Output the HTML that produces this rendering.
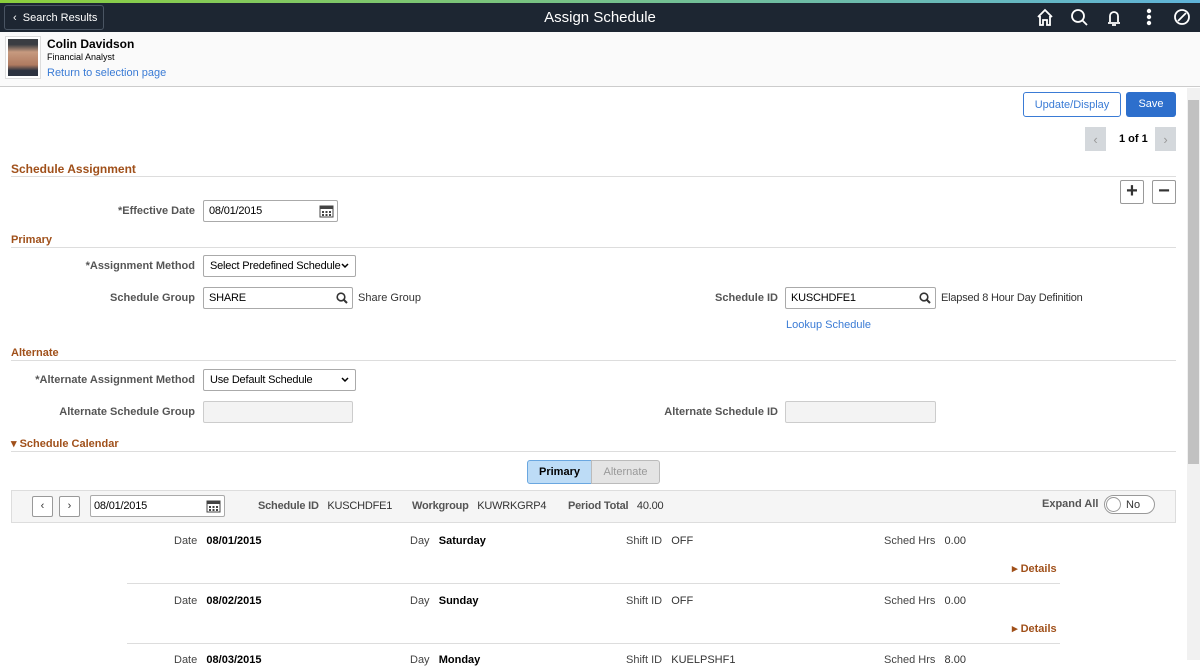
<!DOCTYPE html><html><head><style>
*{box-sizing:border-box;margin:0;padding:0}
body{width:1200px;height:660px;overflow:hidden;font-family:"Liberation Sans",Arial,sans-serif;font-size:11px;color:#333;background:#fff;position:relative}
.a{position:absolute;white-space:nowrap}
.lbl{font-weight:bold;color:#555;font-size:11px;text-align:right}
.inp{position:absolute;height:22px;border:1px solid #aaa;border-radius:2px;background:#fff;font-size:11px;padding:4px 5px;color:#000;white-space:nowrap;letter-spacing:-0.2px}
.dis{background:#f3f3f3;border-color:#ccc}
.sec{position:absolute;left:11px;font-weight:bold;color:#a0501a;font-size:11px}
.line{position:absolute;left:11px;right:24px;border-top:1px solid #ddd}
.dl{color:#444}.db{font-weight:bold;color:#000}
.det{color:#a0501a;font-weight:bold}
.car{position:absolute;right:6px;top:7px}
.cal{position:absolute;right:3px;top:3px}
</style></head><body>
<div class="a" style="left:0;top:0;width:1200px;height:3px;background:linear-gradient(90deg,#8ccf3c,#5fb3d9)"></div>
<div class="a" style="left:0;top:3px;width:1200px;height:29px;background:#1d2632"></div>
<div class="a" style="left:4px;top:5px;width:100px;height:25px;border:1px solid #4a5563;border-radius:3px;color:#fff;font-size:11px;padding:6px 0 0 8px">‹&nbsp; Search Results</div>
<div class="a" style="left:0;width:1200px;top:9px;text-align:center;color:#fff;font-size:15px">Assign Schedule</div>
<svg class="a" style="left:1030px;top:6px" width="165" height="22" fill="none" stroke="#fff" stroke-width="1.8">
<path d="M8 11 L15 4 L22 11 M10 10 V19 H13 V14 H17 V19 H20 V10"/>
<circle cx="48" cy="10" r="6"/><path d="M52 14 L57 19"/>
<path d="M78 17 H90 M80 16 V10 a4 4 0 0 1 8 0 V16 M82 19 h4"/>
<circle cx="119" cy="5" r="1.3" fill="#fff"/><circle cx="119" cy="11" r="1.3" fill="#fff"/><circle cx="119" cy="17" r="1.3" fill="#fff"/>
<circle cx="152" cy="11" r="7"/><path d="M148 15 L156 7"/>
</svg>
<div class="a" style="left:0;top:32px;width:1200px;height:55px;background:#fafafa;border-bottom:1px solid #ccc"></div>
<div class="a" style="left:5px;top:36px;width:36px;height:43px;border:1px solid #ddd;background:#fff;padding:2px"><div style="width:100%;height:100%;background:linear-gradient(#3a3d42 15%,#c79a7f 35%,#b07a60 70%,#2d3340 85%)"></div></div>
<div class="a" style="left:47px;top:37px;font-weight:bold;font-size:12px;color:#000">Colin Davidson</div>
<div class="a" style="left:47px;top:52px;font-size:9px;color:#000">Financial Analyst</div>
<div class="a" style="left:47px;top:67px;color:#3a7bd5;font-size:11px">Return to selection page</div>
<div class="a" style="left:1187px;top:88px;width:13px;height:572px;background:#f1f1f1"></div>
<div class="a" style="left:1188px;top:100px;width:11px;height:364px;background:#c1c1c1"></div>
<div class="a" style="left:1023px;top:92px;width:98px;height:25px;border:1px solid #3a7bd5;border-radius:3px;color:#3a7bd5;text-align:center;padding-top:6px">Update/Display</div>
<div class="a" style="left:1126px;top:92px;width:50px;height:25px;background:#2d6fcc;border-radius:3px;color:#fff;text-align:center;padding-top:6px">Save</div>
<div class="a" style="left:1085px;top:127px;width:21px;height:24px;background:#d4d8dc;color:#999;text-align:center;padding-top:5px;font-size:13px">‹</div>
<div class="a" style="left:1119px;top:133px;font-weight:bold;color:#000">1 of 1</div>
<div class="a" style="left:1155px;top:127px;width:21px;height:24px;background:#d4d8dc;color:#999;text-align:center;padding-top:5px;font-size:13px">›</div>
<div class="sec" style="top:162px;font-size:12px">Schedule Assignment</div><div class="line" style="top:176px"></div>
<div class="a" style="left:1120px;top:180px;width:24px;height:24px;border:1px solid #999;border-radius:2px;text-align:center;font-size:20px;font-weight:bold;line-height:21px;color:#333">+</div>
<div class="a" style="left:1152px;top:180px;width:24px;height:24px;border:1px solid #999;border-radius:2px;text-align:center;font-size:20px;font-weight:bold;line-height:20px;color:#333">−</div>
<div class="a lbl" style="left:0;width:195px;top:205px">*Effective Date</div>
<div class="inp" style="left:203px;top:200px;width:135px">08/01/2015<svg class="cal" width="15" height="14"><rect x="1" y="2" width="13" height="11" fill="none" stroke="#444"/><rect x="1" y="2" width="13" height="3" fill="#444"/><g fill="#444"><rect x="3" y="7" width="2" height="2"/><rect x="6.5" y="7" width="2" height="2"/><rect x="10" y="7" width="2" height="2"/><rect x="3" y="10" width="2" height="2"/><rect x="6.5" y="10" width="2" height="2"/><rect x="10" y="10" width="2" height="2"/></g></svg></div>
<div class="sec" style="top:234px">Primary</div><div class="line" style="top:247px"></div>
<div class="a lbl" style="left:0;width:195px;top:260px">*Assignment Method</div>
<div class="inp" style="left:203px;top:255px;width:153px;padding-left:6px">Select Predefined Schedule<svg class="car" width="8" height="6"><path d="M1 1 L4 4 L7 1" fill="none" stroke="#000" stroke-width="1.5"/></svg></div>
<div class="a lbl" style="left:0;width:195px;top:292px">Schedule Group</div>
<div class="inp" style="left:203px;top:287px;width:150px">SHARE<svg class="cal" style="top:4px;right:4px" width="12" height="12"><circle cx="5" cy="5" r="3.8" fill="none" stroke="#333" stroke-width="1.6"/><path d="M8 8 L11 11" stroke="#333" stroke-width="2"/></svg></div>
<div class="a" style="left:358px;top:292px;color:#333">Share Group</div>
<div class="a lbl" style="left:600px;width:178px;top:292px">Schedule ID</div>
<div class="inp" style="left:785px;top:287px;width:151px">KUSCHDFE1<svg class="cal" style="top:4px;right:4px" width="12" height="12"><circle cx="5" cy="5" r="3.8" fill="none" stroke="#333" stroke-width="1.6"/><path d="M8 8 L11 11" stroke="#333" stroke-width="2"/></svg></div>
<div class="a" style="left:941px;top:292px;letter-spacing:-0.2px">Elapsed 8 Hour Day Definition</div>
<div class="a" style="left:786px;top:319px;color:#3a7bd5">Lookup Schedule</div>
<div class="sec" style="top:347px">Alternate</div><div class="line" style="top:360px"></div>
<div class="a lbl" style="left:0;width:195px;top:374px">*Alternate Assignment Method</div>
<div class="inp" style="left:203px;top:369px;width:153px;padding-left:6px">Use Default Schedule<svg class="car" width="8" height="6"><path d="M1 1 L4 4 L7 1" fill="none" stroke="#000" stroke-width="1.5"/></svg></div>
<div class="a lbl" style="left:0;width:195px;top:406px">Alternate Schedule Group</div>
<div class="inp dis" style="left:203px;top:401px;width:150px"></div>
<div class="a lbl" style="left:600px;width:178px;top:406px">Alternate Schedule ID</div>
<div class="inp dis" style="left:785px;top:401px;width:151px"></div>
<div class="sec" style="top:437px">▾ Schedule Calendar</div><div class="line" style="top:451px"></div>
<div class="a" style="left:527px;top:460px;width:65px;height:24px;background:#bddcf6;border:1px solid #6aa7e0;border-radius:3px 0 0 3px;font-weight:bold;color:#000;text-align:center;padding-top:5px">Primary</div>
<div class="a" style="left:591px;top:460px;width:69px;height:24px;background:#e4e4e4;border:1px solid #bbb;border-radius:0 3px 3px 0;color:#999;text-align:center;padding-top:5px">Alternate</div>
<div class="a" style="left:11px;top:490px;width:1165px;height:33px;background:#f5f5f5;border:1px solid #ddd"></div>
<div class="a" style="left:32px;top:496px;width:21px;height:21px;border:1px solid #999;background:#fff;border-radius:2px;text-align:center;padding-top:3px">‹</div>
<div class="a" style="left:59px;top:496px;width:21px;height:21px;border:1px solid #999;background:#fff;border-radius:2px;text-align:center;padding-top:3px">›</div>
<div class="inp" style="left:90px;top:495px;width:135px;padding-left:3px">08/01/2015<svg class="cal" width="15" height="14"><rect x="1" y="2" width="13" height="11" fill="none" stroke="#444"/><rect x="1" y="2" width="13" height="3" fill="#444"/><g fill="#444"><rect x="3" y="7" width="2" height="2"/><rect x="6.5" y="7" width="2" height="2"/><rect x="10" y="7" width="2" height="2"/><rect x="3" y="10" width="2" height="2"/><rect x="6.5" y="10" width="2" height="2"/><rect x="10" y="10" width="2" height="2"/></g></svg></div>
<div class="a" style="left:258px;top:500px;letter-spacing:-0.2px"><b style="color:#555">Schedule ID</b>&nbsp;&nbsp; KUSCHDFE1</div>
<div class="a" style="left:412px;top:500px;letter-spacing:-0.2px"><b style="color:#555">Workgroup</b>&nbsp;&nbsp; KUWRKGRP4</div>
<div class="a" style="left:568px;top:500px;letter-spacing:-0.2px"><b style="color:#555">Period Total</b>&nbsp;&nbsp; 40.00</div>
<div class="a" style="left:1042px;top:498px;font-weight:bold;color:#555">Expand All</div>
<div class="a" style="left:1104px;top:495px;width:51px;height:19px;border:1px solid #999;border-radius:10px;background:#fff"><div style="position:absolute;left:1px;top:1px;width:15px;height:15px;border-radius:50%;border:1px solid #999"></div><span style="position:absolute;left:21px;top:3px">No</span></div>
<div class="a" style="left:174px;top:535px"><span class="dl">Date</span>&nbsp;&nbsp; <span class="db">08/01/2015</span></div>
<div class="a" style="left:410px;top:535px"><span class="dl">Day</span>&nbsp;&nbsp; <span class="db">Saturday</span></div>
<div class="a" style="left:626px;top:535px"><span class="dl">Shift ID</span>&nbsp;&nbsp; OFF</div>
<div class="a" style="left:884px;top:535px"><span class="dl">Sched Hrs</span>&nbsp;&nbsp; 0.00</div>
<div class="a det" style="left:1012px;top:562px">▸ Details</div>
<div class="a" style="left:127px;top:583px;width:933px;border-top:1px solid #ddd"></div>
<div class="a" style="left:174px;top:595px"><span class="dl">Date</span>&nbsp;&nbsp; <span class="db">08/02/2015</span></div>
<div class="a" style="left:410px;top:595px"><span class="dl">Day</span>&nbsp;&nbsp; <span class="db">Sunday</span></div>
<div class="a" style="left:626px;top:595px"><span class="dl">Shift ID</span>&nbsp;&nbsp; OFF</div>
<div class="a" style="left:884px;top:595px"><span class="dl">Sched Hrs</span>&nbsp;&nbsp; 0.00</div>
<div class="a det" style="left:1012px;top:622px">▸ Details</div>
<div class="a" style="left:127px;top:643px;width:933px;border-top:1px solid #ddd"></div>
<div class="a" style="left:174px;top:654px"><span class="dl">Date</span>&nbsp;&nbsp; <span class="db">08/03/2015</span></div>
<div class="a" style="left:410px;top:654px"><span class="dl">Day</span>&nbsp;&nbsp; <span class="db">Monday</span></div>
<div class="a" style="left:626px;top:654px"><span class="dl">Shift ID</span>&nbsp;&nbsp; KUELPSHF1</div>
<div class="a" style="left:884px;top:654px"><span class="dl">Sched Hrs</span>&nbsp;&nbsp; 8.00</div>
</body></html>
